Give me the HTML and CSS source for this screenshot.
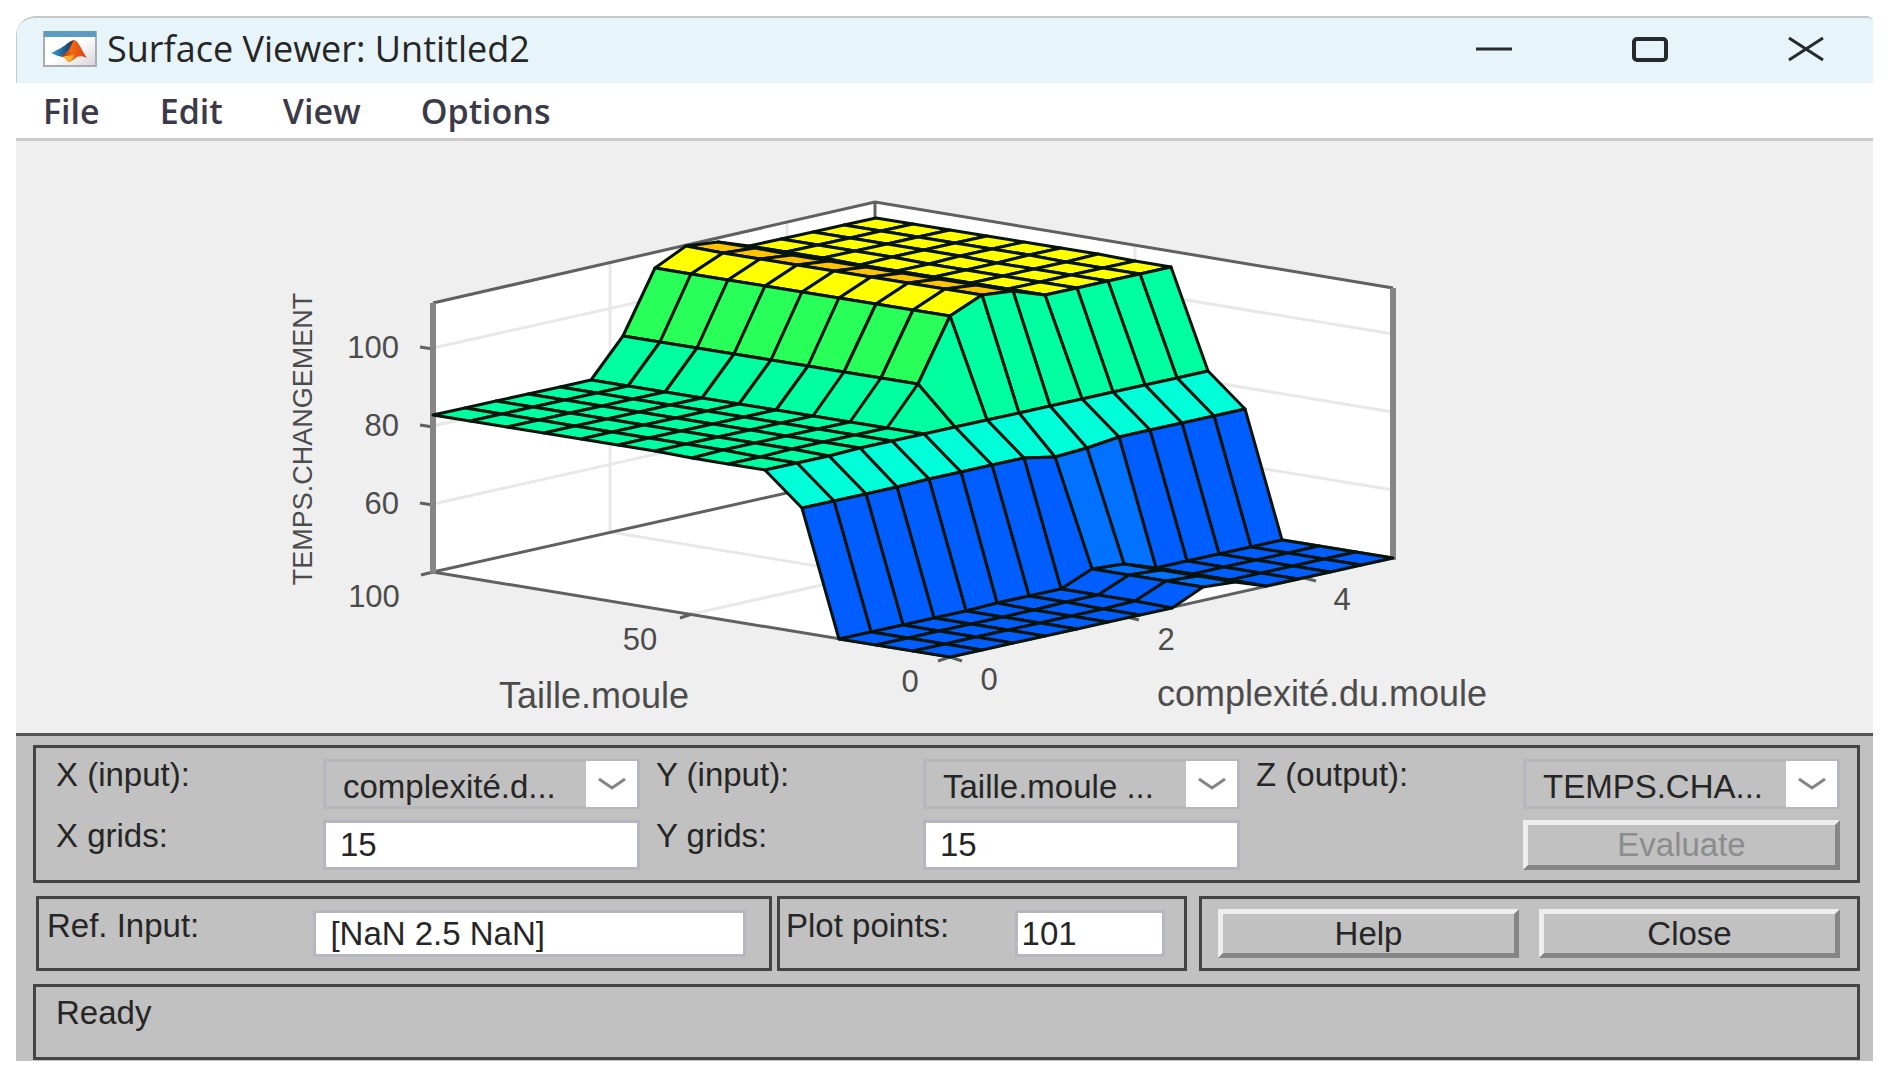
FILE: index.html
```html
<!DOCTYPE html>
<html lang="fr">
<head>
<meta charset="utf-8">
<title>Surface Viewer: Untitled2</title>
<link rel="stylesheet" href="styles.css">
</head>
<body>
<div class="window">
  <header class="titlebar">
    <svg class="app-icon" viewBox="0 0 54 36" aria-hidden="true">
      <defs>
        <linearGradient id="face" x1="0" y1="0" x2="1" y2="1"><stop offset="0.5" stop-color="#fff"/><stop offset="1" stop-color="#d4d4d8"/></linearGradient>
        <linearGradient id="wing" x1="0" y1="0" x2="1" y2="0"><stop offset="0" stop-color="#3fa0d8"/><stop offset="0.7" stop-color="#174f86"/><stop offset="1" stop-color="#6b2530"/></linearGradient>
        <linearGradient id="peak" x1="0" y1="0" x2="1" y2="0"><stop offset="0" stop-color="#a02a12"/><stop offset="0.4" stop-color="#f06a10"/><stop offset="1" stop-color="#d8401c"/></linearGradient>
      </defs>
      <rect x="1" y="1" width="52" height="34" fill="url(#face)" stroke="#a9abb0" stroke-width="2"/>
      <rect x="1" y="0" width="52" height="6" fill="#5b9cc0"/>
      <path d="M8 22 L18 17 C23 14 26 10 31 9 L28 19 L20 26 L15 25 Z" fill="url(#wing)"/>
      <path d="M31 9 C35 9 38 18 44 27 C40 25 37 25 34 26 C31 28 28 31 25 31 C23 27 21 26 18 25 C25 22 28 15 31 9 Z" fill="url(#peak)"/>
      <path d="M19 26 C24 24 28 25 31 24 C30 28 27 31 25 31 C23 28 22 27 19 26 Z" fill="#ffae2e"/>
    </svg>
    <h1 class="title">Surface Viewer: Untitled2</h1>
    <div class="window-buttons">
      <button class="window-button" type="button" aria-label="Minimize"><svg viewBox="0 0 38 28"><path d="M1 14H37" stroke-width="3"/></svg></button>
      <button class="window-button" type="button" aria-label="Maximize"><svg viewBox="0 0 38 28"><rect x="3" y="4" width="32" height="21" rx="3" stroke-width="4"/></svg></button>
      <button class="window-button" type="button" aria-label="Close window"><svg viewBox="0 0 38 28"><path d="M2 3L36 25M36 3L2 25" stroke-width="3"/></svg></button>
    </div>
  </header>
  <nav class="menubar">
    <a class="menu" href="#file">File</a>
    <a class="menu" href="#edit">Edit</a>
    <a class="menu" href="#view">View</a>
    <a class="menu" href="#options">Options</a>
  </nav>
  <main>
    <svg class="plot" viewBox="16 141 1857 592" role="img" aria-label="Surface plot">
      <path class="wall" d="M433 303L875 202L1393 288V558L950 657L433 572Z"/>
      <path class="grid" d="M433 504L876 405L1393 490M433 426L876 327L1393 412M433 348L876 249L1393 334M610 532V262M787 492V222M1135 515V246M692 614L1135 515M1127 617L610 532M1304 578L787 492"/>
      <path class="box" d="M433 303L875 202L1393 288M433 572L876 473L1393 558M433 572L950 657L1393 558M875 202V473M420 347L433 349M420 425L433 427M420 503L433 505M433 572L421 575M692 614L680 618M950 657L938 661M950 657L962 661M1127 617L1139 620M1304 578L1316 581"/>
      <path class="post" d="M433 303V573M1393 288V560"/>
      <g id="surface" class="surface"></g>
      <g class="tick">
        <text x="399" y="358" class="end">100</text>
        <text x="399" y="436" class="end">80</text>
        <text x="399" y="514" class="end">60</text>
        <text x="374" y="607">100</text>
        <text x="640" y="650">50</text>
        <text x="910" y="692">0</text>
        <text x="989" y="690">0</text>
        <text x="1166" y="650">2</text>
        <text x="1342" y="610">4</text>
      </g>
      <g class="axis">
        <text x="594" y="708">Taille.moule</text>
        <text x="1322" y="706">complexité.du.moule</text>
        <text class="upright" transform="translate(312 439) rotate(-90)">TEMPS.CHANGEMENT</text>
      </g>
    </svg>
    <form class="controls">
      <section class="panel inputs">
        <div class="group">
          <label for="x-input">X (input):</label>
          <div class="popup">
            <select id="x-input"><option>complexité.d...</option></select>
            <span class="arrow"><svg viewBox="0 0 30 14"><path d="M2 2L15 11L28 2"/></svg></span>
          </div>
          <label for="x-grids">X grids:</label>
          <input id="x-grids" type="text" value="15">
        </div>
        <div class="group">
          <label for="y-input">Y (input):</label>
          <div class="popup">
            <select id="y-input"><option>Taille.moule ...</option></select>
            <span class="arrow"><svg viewBox="0 0 30 14"><path d="M2 2L15 11L28 2"/></svg></span>
          </div>
          <label for="y-grids">Y grids:</label>
          <input id="y-grids" type="text" value="15">
        </div>
        <div class="group">
          <label for="z-output">Z (output):</label>
          <div class="popup">
            <select id="z-output"><option>TEMPS.CHA...</option></select>
            <span class="arrow"><svg viewBox="0 0 30 14"><path d="M2 2L15 11L28 2"/></svg></span>
          </div>
          <button class="push evaluate" type="button" disabled>Evaluate</button>
        </div>
      </section>
      <div class="middle">
        <section class="panel ref">
          <label for="ref-input">Ref. Input:</label>
          <input id="ref-input" type="text" value="[NaN 2.5 NaN]">
        </section>
        <section class="panel points">
          <label for="plot-points">Plot points:</label>
          <input id="plot-points" type="text" value="101">
        </section>
        <section class="panel actions">
          <button class="push" type="button">Help</button>
          <button class="push" type="button">Close</button>
        </section>
      </div>
      <output class="panel status">Ready</output>
    </form>
  </main>
</div>
<script src="surface.js"></script>
</body>
</html>
```
FILE: styles.css
```css
* { box-sizing: border-box; }

body {
  margin: 0;
  padding: 16px 15px 19px 16px;
  background: #fff;
  color: #262626;
  font-family: "Liberation Sans", Arial, sans-serif;
  font-size: 33px;
}

.window {
  border-top: 2px solid #c4c8c8;
  border-radius: 20px 6px 0 0;
  overflow: hidden;
  background: #efefef;
}

.titlebar {
  display: flex;
  align-items: center;
  height: 65px;
  padding: 0 48px 3px 26px;
  background: #e7f4f9;
  border-left: 1px solid #c4c8c8;
}

.app-icon { width: 54px; height: 36px; }

.title {
  flex: 1;
  margin: 0 0 0 10px;
  font: 400 36px/40px "Open Sans", sans-serif;
}

.window-buttons { display: flex; gap: 118px; }

.window-button {
  width: 38px;
  height: 28px;
  padding: 0;
  border: 0;
  background: none;
}

.window-button svg {
  display: block;
  fill: none;
  stroke: #262a2c;
}

.menubar {
  display: flex;
  gap: 60px;
  height: 58px;
  padding: 6px 27px 0;
  background: #fff;
  border-bottom: 3px solid #cbcbcb;
}

.menu {
  color: #3a3a48;
  font: 600 34px/44px "Open Sans", sans-serif;
  text-decoration: none;
}

.plot {
  display: block;
  width: 100%;
  height: auto;
}

.wall { fill: #fff; }
.grid { fill: none; stroke: #e8e8e8; stroke-width: 3; }
.box { fill: none; stroke: #606060; stroke-width: 3; }
.post { fill: none; stroke: #858585; stroke-width: 6; }

.surface polygon {
  stroke: #06140e;
  stroke-width: 3;
  stroke-linejoin: round;
}

.plot text { fill: #4c4c4c; text-anchor: middle; }
.plot .end { text-anchor: end; }
.tick { font-size: 31px; }
.axis { font-size: 36px; }
.axis .upright { font-size: 27px; }

.controls {
  display: flex;
  flex-direction: column;
  gap: 13px;
  padding: 9px 13px 1px 17px;
  border-top: 3px solid #555;
  background: #c1c1c1;
}

.panel { border: 3px solid #444; }

.inputs {
  display: grid;
  grid-template-columns: repeat(3, 1fr);
  gap: 16px;
  padding: 11px 17px 10px 20px;
}

.group {
  display: grid;
  grid-template-columns: 267fr 317fr;
  grid-template-rows: 50px 50px;
  row-gap: 11px;
}

label { line-height: 32px; white-space: nowrap; }

input, select, .push {
  width: 100%;
  min-width: 0;
  color: #262626;
  font: inherit;
}

input {
  padding: 0 14px;
  border: 3px solid #b6b7be;
  background: #fff;
}

.popup { position: relative; }

select {
  height: 100%;
  padding: 4px 64px 0 17px;
  border: 3px solid #b6b7be;
  border-radius: 0;
  background: #c1c1c1;
  appearance: none;
}

.arrow {
  position: absolute;
  top: 2px;
  right: 3px;
  bottom: 2px;
  display: grid;
  place-items: center;
  width: 51px;
  background: #fff;
  pointer-events: none;
}

.arrow svg { width: 30px; height: 14px; fill: none; stroke: #858585; stroke-width: 3; }

.push {
  padding: 0;
  border: 5px solid;
  border-color: #eee #858585 #858585 #eee;
  border-radius: 0;
  background: #c1c1c1;
}

.evaluate { grid-column: 2; }
.evaluate:disabled { color: #8c8c8c; }

.middle {
  display: grid;
  grid-template-columns: 736fr 410fr 668fr;
  gap: 5px;
  height: 75px;
  padding-left: 3px;
}

.ref {
  display: grid;
  grid-template-columns: 266fr 432fr;
  padding: 11px 23px 11px 8px;
}

.points {
  display: grid;
  grid-template-columns: 228fr 150fr;
  padding: 11px 19px 11px 6px;
}

.points input { padding: 0 4px; }

.actions {
  display: grid;
  grid-template-columns: 1fr 1fr;
  gap: 20px;
  margin-left: 7px;
  padding: 10px 17px 10px 16px;
}

.status {
  display: block;
  height: 76px;
  padding: 10px 20px;
  line-height: 32px;
}
```
FILE: surface.js
```js
// Heights are in drawing units above the floor of the axes box.
const N = 15;
const origin = [950, 657];
const xAxis = [443, -99];
const yAxis = [-517, -85];

const high = [157, 157, 157, 157, 157, 157, 194, 255, 269, 266, 255, 255, 255, 255, 255];
const edge = [125, 125, 125, 125, 125, 125, 125, 125, 119, 121, 125, 125, 125, 125, 125];
const low = [0, 0, 0, 0, 0, 0, 0, 0, 13, 11, 0, 0, 0, 0, 0];

function height(i, j) {
  if (j <= 3) return low[i];
  if (j === 4) return edge[i];
  if (j === 5) return 157;
  return high[i];
}

function color(i, j) {
  if (j <= 3) return i === 8 || i === 9 ? '#0072ff' : '#005eff';
  if (j === 4) return '#00ffd8';
  if (j === 5 || i <= 5) return '#00ffa0';
  if (i === 6) return '#29ff59';
  return i === 8 || i === 9 ? '#ffc400' : '#ffff00';
}

function point(i, j) {
  const u = i / (N - 1);
  const v = j / (N - 1);
  const x = origin[0] + u * xAxis[0] + v * yAxis[0];
  const y = origin[1] + u * xAxis[1] + v * yAxis[1] - height(i, j);
  return Math.round(x) + ',' + Math.round(y);
}

const surface = document.getElementById('surface');

// Far cells first, so nearer ones cover them.
for (let j = N - 2; j >= 0; j--) {
  for (let i = N - 2; i >= 0; i--) {
    const cell = document.createElementNS('http://www.w3.org/2000/svg', 'polygon');
    cell.setAttribute('points', [point(i, j), point(i + 1, j), point(i + 1, j + 1), point(i, j + 1)].join(' '));
    cell.setAttribute('fill', color(i, j));
    surface.appendChild(cell);
  }
}
```
